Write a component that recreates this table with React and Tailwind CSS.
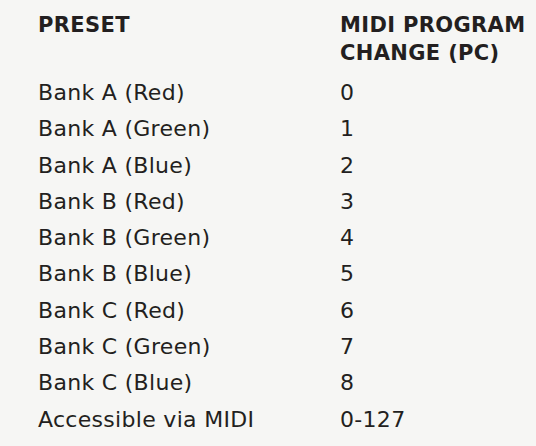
import React from 'react';

const rows = [
  ['Bank A (Red)', '0'],
  ['Bank A (Green)', '1'],
  ['Bank A (Blue)', '2'],
  ['Bank B (Red)', '3'],
  ['Bank B (Green)', '4'],
  ['Bank B (Blue)', '5'],
  ['Bank C (Red)', '6'],
  ['Bank C (Green)', '7'],
  ['Bank C (Blue)', '8'],
  ['Accessible via MIDI', '0-127'],
];

export default function App() {
  return (
    <div
      className="w-[536px] h-[446px] overflow-hidden bg-[#f6f6f4] text-[#231f20] pl-[38px] pt-[11px]"
      style={{ fontFamily: '"DejaVu Sans", "Noto Sans", sans-serif' }}
    >
      <div className="grid grid-cols-[302px_1fr]">
        {/* Header */}
        <div className="text-[21px] font-bold leading-[28px] tracking-[0.35px]">PRESET</div>
        <div className="text-[21px] font-bold leading-[28px] tracking-[0.35px]">
          MIDI PROGRAM
          <br />
          CHANGE (PC)
        </div>
        <div className="col-span-2 h-[8px]"></div>

        {rows.map(([name, pc]) => (
          <React.Fragment key={name}>
            <div className="text-[22px] leading-[36.3px] tracking-[0.3px]">{name}</div>
            <div className="text-[22px] leading-[36.3px] tracking-[0.3px]">{pc}</div>
          </React.Fragment>
        ))}
      </div>
    </div>
  );
}
